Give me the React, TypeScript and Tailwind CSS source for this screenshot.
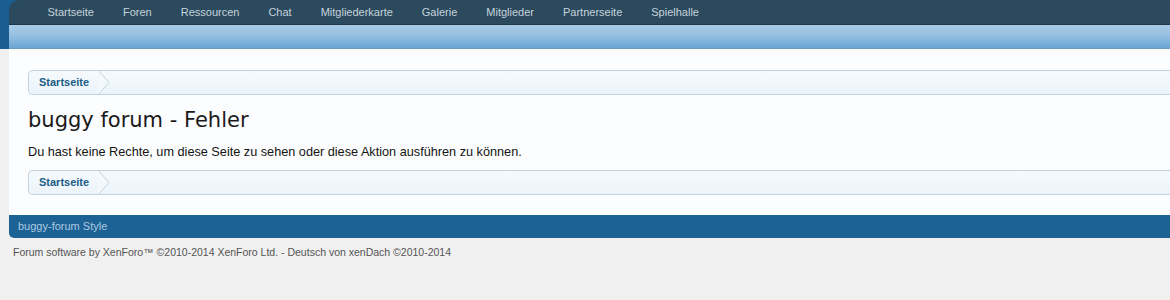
import React from "react";

const nav = ["Startseite", "Foren", "Ressourcen", "Chat", "Mitgliederkarte", "Galerie", "Mitglieder", "Partnerseite", "Spielhalle"];

function Crumb() {
  return (
    <div className="flex h-[25px] items-center rounded-l-[5px] border border-r-0 border-[#c3d3de] bg-gradient-to-b from-[#f5fafd] to-[#ecf4fa]">
      <div className="relative flex h-full items-center pl-[10px] pr-[10px] text-[11px] font-bold text-[#1a5c86]">
        Startseite
        <svg className="absolute right-[-12px] top-[-1px]" width="14" height="25" viewBox="0 0 14 25">
          <path d="M1 0 L12 12.5 L1 25" fill="#f3f8fc" stroke="#c3d3de" strokeWidth="1" />
        </svg>
      </div>
    </div>
  );
}

export default function App() {
  return (
    <div className="min-h-[300px] bg-[#f0f0f0]" style={{ fontFamily: '"Liberation Sans", Arial, sans-serif' }}>
      <div className="bg-gradient-to-r from-[#1a5d92] to-[#1f6aa3] pl-[9px]">
        <div className="flex h-[25px] items-center rounded-tl-[10px] border-b border-[#1f3445] bg-[#2c4a5e] pl-[24px]">
          {nav.map((n) => (
            <span key={n} className="px-[14.5px] text-[11px] text-[#c6d3dc]">{n}</span>
          ))}
        </div>
        <div className="h-[24px] border-b border-[#6f9bbd] bg-gradient-to-b from-[#a9cbe7] via-[#93bee2] to-[#69a6d3]" />
      </div>
      <div className="ml-[9px] bg-[#fcfdfe] pl-[19px] pt-[21px] pb-[20px]">
        <Crumb />
        <h1 className="mt-[11px] text-[21px] leading-[28px] text-[#1a1a1a]" style={{ fontFamily: '"DejaVu Sans", Verdana, sans-serif' }}>buggy forum - Fehler</h1>
        <p className="mt-[9px] text-[12.7px] leading-[18px] text-[#141414]">Du hast keine Rechte, um diese Seite zu sehen oder diese Aktion ausführen zu können.</p>
        <div className="mt-[9px]"><Crumb /></div>
      </div>
      <div className="ml-[9px] flex h-[23px] items-center rounded-bl-[5px] bg-[#1d6294] pl-[9px] text-[11px] text-[#a9c9e2]">
        buggy-forum Style
      </div>
      <div className="pl-[13px] pt-[7px] text-[10.5px] text-[#555]">
        Forum software by XenForo™ ©2010-2014 XenForo Ltd. - Deutsch von xenDach ©2010-2014
      </div>
    </div>
  );
}
